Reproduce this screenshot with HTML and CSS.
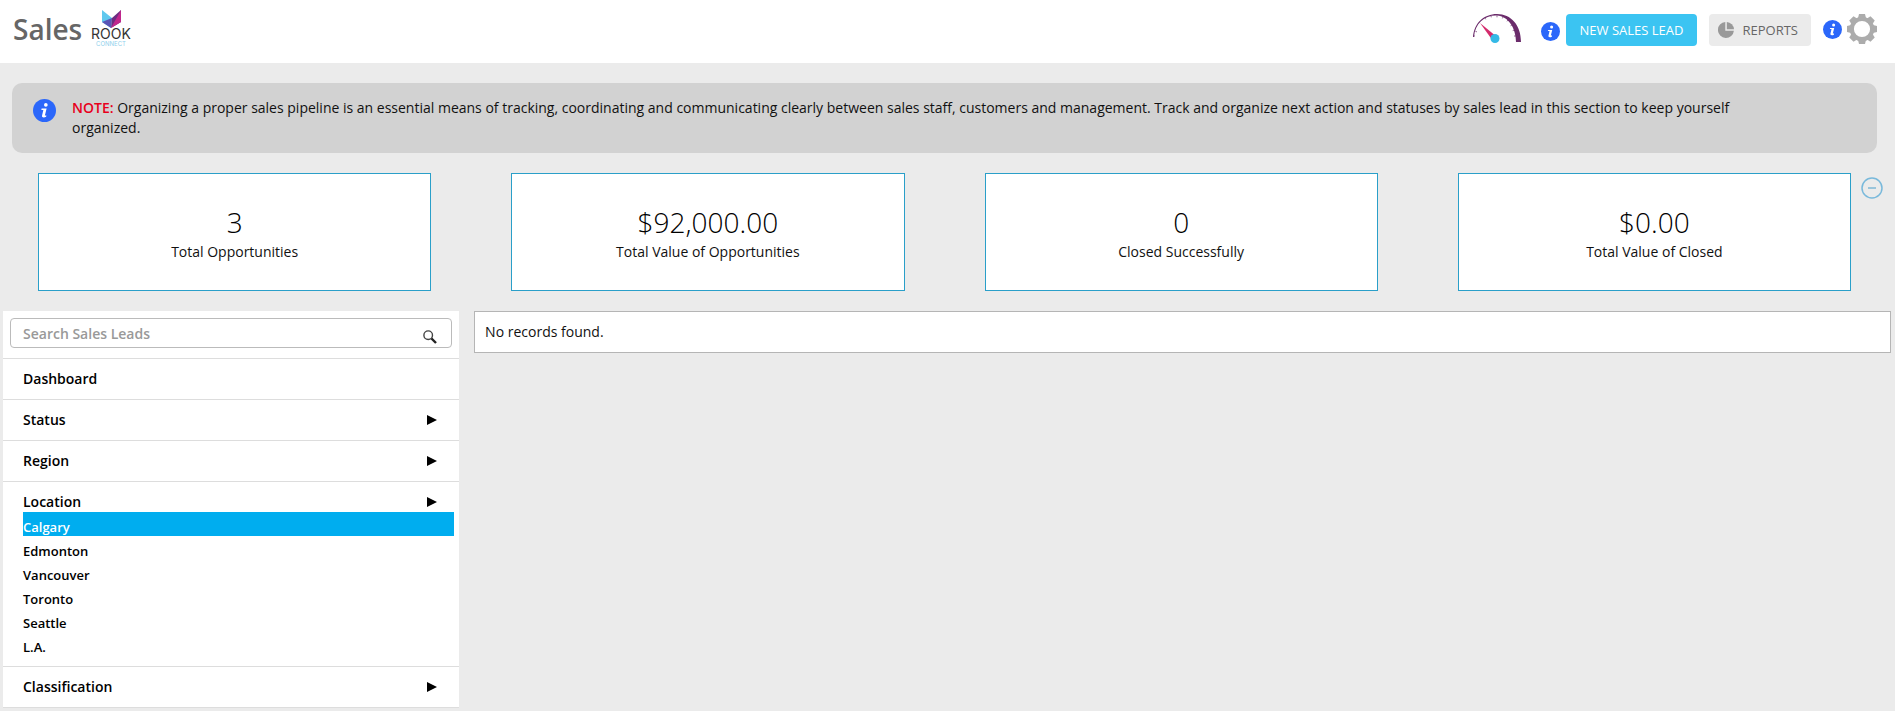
FILE: index.html
```html
<!DOCTYPE html>
<html lang="en">
<head>
<meta charset="utf-8">
<title>Sales</title>
<link rel="stylesheet" href="styles.css">
</head>
<body>
<svg class="defs" aria-hidden="true">
  <symbol id="info" viewBox="0 0 24 24">
    <circle cx="12" cy="12" r="12" fill="#2b67fa"/>
    <circle cx="13.4" cy="6.2" r="1.9" fill="#fff"/>
    <path d="M9 10h5.2l-1.8 7.2h1.6l-.3 1.3c-1.500 .9-4.700 1.300-4.300-1l1.400-6H8.700z" fill="#fff"/>
  </symbol>
</svg>
<header class="topbar">
  <h1 class="title">Sales</h1>
  <svg class="logo" viewBox="0 0 42 40" role="img" aria-label="Rook Connect">
    <path d="M12 1l10 8-1 10-9-6z" fill="#5fc8ee"/>
    <path d="M12 13l10-4-1 10z" fill="#5a55b5"/>
    <path d="M31 1v12l-10 6 1-10z" fill="#6d2c80"/>
    <path d="M31 1v12l-10 6z" fill="#c0268c"/>
    <text class="logo-name" x="21" y="30" text-anchor="middle">ROOK</text>
    <text class="logo-sub" x="21" y="37" text-anchor="middle">CONNECT</text>
  </svg>
  <div class="actions">
    <svg class="gauge" viewBox="0 0 48 30" aria-hidden="true">
      <path d="M0 23C1 9 11 0 24 0c14 0 24 11 24 28h-5C43 14 35 2 24 1.500 12 1 2 9 1 23z" fill="#6b2c6b"/>
      <path d="M2.500 17.500l1.500 .3M12 4l.7 1.300M18 2l.3 1.300M24 1.500v1.800M30 3l-.6 1.400M35 6l-1 1.300M39 11l-1.500 .8M41.500 16l-1.800 .6M43 22h-2M0 22h2" stroke="#6b2c6b" stroke-width=".7" fill="none"/>
      <path d="M7 9l17 14-4 4z" fill="#d42b6c"/>
      <circle cx="22" cy="24.500" r="4.500" fill="#35b9e6"/>
    </svg>
    <svg class="info-sm"><use href="#info"/></svg>
    <button class="btn btn-primary" type="button">NEW SALES LEAD</button>
    <button class="btn btn-muted" type="button">
      <svg class="pie" viewBox="0 0 16 16" aria-hidden="true"><path d="M7.300 0a8 8 0 1 0 8.600 8.800H7.300z" fill="#999"/><path d="M8.800 0a8 8 0 0 1 7.200 7.300H8.800z" fill="#999"/></svg>
      REPORTS
    </button>
    <svg class="info-sm info-last"><use href="#info"/></svg>
    <button class="gear" type="button" aria-label="Settings">
      <svg viewBox="-15 -15 30 30">
        <circle r="10.200" fill="none" stroke="#acacac" stroke-width="4.200"/>
        <g fill="#acacac">
          <path id="tooth" d="M-4-11l1-4h6l1 4z"/>
          <use href="#tooth" transform="rotate(45)"/><use href="#tooth" transform="rotate(90)"/>
          <use href="#tooth" transform="rotate(135)"/><use href="#tooth" transform="rotate(180)"/>
          <use href="#tooth" transform="rotate(225)"/><use href="#tooth" transform="rotate(270)"/>
          <use href="#tooth" transform="rotate(315)"/>
        </g>
      </svg>
    </button>
  </div>
</header>
<main>
  <section class="note">
    <svg class="info-lg"><use href="#info"/></svg>
    <p><span class="note-tag">NOTE:</span> Organizing a proper sales pipeline is an essential means of tracking, coordinating and communicating clearly between sales staff, customers and management. Track and organize next action and statuses by sales lead in this section to keep yourself organized.</p>
  </section>
  <section class="summary">
    <div class="cards">
      <div class="card"><strong>3</strong><span>Total Opportunities</span></div>
      <div class="card"><strong>$92,000.00</strong><span>Total Value of Opportunities</span></div>
      <div class="card"><strong>0</strong><span>Closed Successfully</span></div>
      <div class="card"><strong>$0.00</strong><span>Total Value of Closed</span></div>
    </div>
    <button class="collapse" type="button" aria-label="Collapse summary">
      <svg viewBox="0 0 22 22"><circle cx="11" cy="11" r="10" fill="none" stroke="#79b9db" stroke-width="1.500"/><path d="M7 11h8" stroke="#4a9fcb"/></svg>
    </button>
  </section>
  <div class="content">
    <nav class="sidebar">
      <div class="search">
        <input type="search" placeholder="Search Sales Leads" aria-label="Search Sales Leads">
        <svg viewBox="0 0 14 14" aria-hidden="true"><circle cx="5.200" cy="5.200" r="4.300" fill="none" stroke="#444" stroke-width="1.400"/><path d="M8.500 8.500l4.500 4.500" stroke="#222" stroke-width="2.400"/></svg>
      </div>
      <ul class="menu">
        <li><a class="item" href="#">Dashboard</a></li>
        <li><a class="item" href="#">Status<i class="arrow"></i></a></li>
        <li><a class="item" href="#">Region<i class="arrow"></i></a></li>
        <li>
          <a class="item item-open" href="#">Location<i class="arrow"></i></a>
          <ul class="submenu">
            <li><a class="active" href="#">Calgary</a></li>
            <li><a href="#">Edmonton</a></li>
            <li><a href="#">Vancouver</a></li>
            <li><a href="#">Toronto</a></li>
            <li><a href="#">Seattle</a></li>
            <li><a href="#">L.A.</a></li>
          </ul>
        </li>
        <li><a class="item" href="#">Classification<i class="arrow"></i></a></li>
      </ul>
    </nav>
    <section class="records">No records found.</section>
  </div>
</main>
</body>
</html>
```
FILE: styles.css
```css
* { box-sizing: border-box; }
body {
  margin: 0;
  background: #ebebeb;
  color: #111;
  font: 14px/20px "Open Sans", "Noto Sans", sans-serif;
}
ul { list-style: none; margin: 0; padding: 0; }
a { color: inherit; text-decoration: none; }
button { font: inherit; border: 0; cursor: pointer; }
svg { display: block; flex: none; }
.defs { position: absolute; width: 0; height: 0; }

.topbar {
  display: flex;
  align-items: flex-start;
  height: 63px;
  padding: 9px 18px 0 13px;
  background: #fff;
}
.title { margin: 0; font-size: 28px; line-height: 40px; font-weight: 600; color: #666; }
.logo { width: 42px; height: 40px; margin-left: 8px; }
.logo-name { font: 400 14px "Inter", sans-serif; fill: #333; }
.logo-sub { font: 6px "Inter", sans-serif; fill: #8fd0ec; }
.actions { display: flex; align-items: center; margin: 3px 0 0 auto; }
.gauge { width: 48px; height: 30px; margin-right: 20px; }
.info-sm { width: 19px; height: 19px; margin: 4px 6px 0 0; }
.info-last { margin: 0 5px 0 12px; }
.btn {
  display: flex;
  align-items: center;
  height: 32px;
  margin-top: 2px;
  border-radius: 4px;
  font-size: 13px;
}
.btn-primary { padding: 0 13px 0 14px; background: #3bc4f2; color: #fff; margin-right: 12px; }
.btn-muted { gap: 9px; padding: 0 13px 0 9px; background: #ebebeb; color: #666; }
.pie { width: 16px; height: 16px; }
.gear { padding: 0; background: none; }
.gear svg { width: 30px; height: 30px; }

.note {
  display: flex;
  gap: 16px;
  margin: 20px 18px 20px 12px;
  padding: 15px 120px 15px 21px;
  border-radius: 10px;
  background: #d2d2d2;
}
.note p { margin: 0; }
.note-tag { color: #e8001c; font-weight: 600; }
.info-lg { width: 23px; height: 23px; margin-top: 1px; }

.summary { display: flex; align-items: flex-start; padding: 0 12px 0 38px; }
.cards { flex: 1; display: grid; grid-template-columns: repeat(4, 1fr); gap: 80px; }
.card {
  display: flex;
  flex-direction: column;
  align-items: center;
  height: 118px;
  padding-top: 28px;
  border: 1px solid #2a9fc9;
  background: #fff;
}
.card strong { font-size: 28px; line-height: 40px; font-weight: 300; color: #000; }
.collapse { margin: 4px 0 0 10px; padding: 0; background: none; }
.collapse svg { width: 22px; height: 22px; }

.content { display: flex; align-items: flex-start; gap: 15px; padding: 20px 4px 4px 3px; }
.sidebar { flex: 0 0 calc(24% + 3px); background: #fff; border-bottom: 1px solid #ddd; }
.search { position: relative; padding: 7px 7px 10px; }
.search input {
  display: block;
  width: 100%;
  height: 30px;
  padding: 0 40px 0 12px;
  border: 1px solid #bbb;
  border-radius: 4px;
  font: inherit;
  background: #fff;
}
.search input::placeholder { color: #999; font-weight: 600; }
.search svg { position: absolute; right: 22px; top: 19px; width: 14px; height: 14px; }
.menu > li { border-top: 1px solid #ddd; }
.item {
  display: flex;
  align-items: center;
  justify-content: space-between;
  padding: 10px 22px 10px 20px;
  font-weight: 600;
  color: #000;
}
.item-open { padding-bottom: 0; }
.arrow { border: solid transparent; border-width: 5px 0 5px 10px; border-left-color: #000; }
.submenu { padding: 0 5px 10px 20px; font-size: 13px; font-weight: 600; color: #000; }
.submenu a { display: block; padding-top: 6px; line-height: 18px; }
.submenu .active { background: #00adef; color: #fff; }
.records { flex: 1; padding: 10px; border: 1px solid #b5b5b5; background: #fff; }
```
